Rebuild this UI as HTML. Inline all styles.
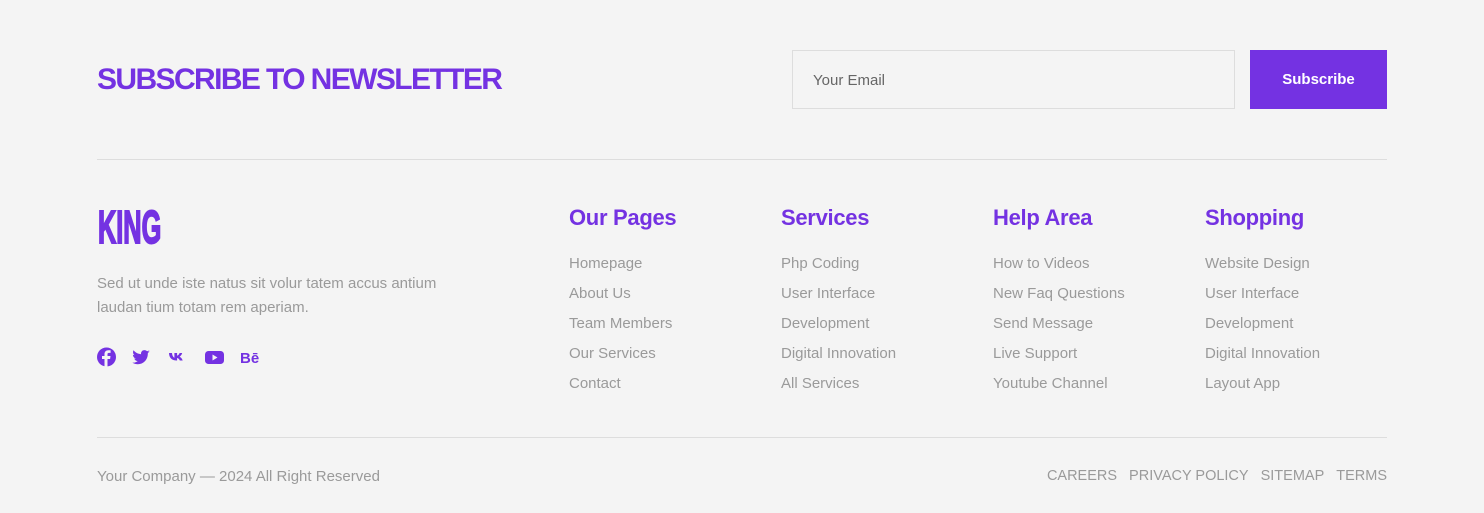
<!DOCTYPE html>
<html><head><style>
*{margin:0;padding:0;box-sizing:border-box}
body{width:1484px;height:513px;background:#f4f4f4;font-family:"Liberation Sans",sans-serif;position:relative;overflow:hidden;color:#9a9a9a}
.a{position:absolute}
h2{position:absolute;left:97px;top:63px;font-size:30px;font-weight:bold;color:#7432e2;letter-spacing:-1.6px;white-space:nowrap}
.inp{left:792px;top:50px;width:443px;height:59px;border:1px solid #ddd;background:#f4f4f4;font-size:15px;color:#666;padding:21px 20px}
.btn{left:1250px;top:50px;width:137px;height:59px;background:#7432e2;color:#fff;font-weight:bold;font-size:15px;text-align:center;line-height:59px}
.hr{left:97px;width:1290px;height:1px;background:#ddd}
.logo{left:98px;top:201px;font-size:46px;line-height:52px;font-weight:bold;color:#7432e2;transform:scaleX(0.55);transform-origin:left top;-webkit-text-stroke:2px #7432e2}
.desc{left:97px;top:272px;font-size:15px;line-height:24px;width:380px}
.col{top:205px}
.col h3{font-size:22px;font-weight:bold;color:#7432e2;margin-bottom:18px;letter-spacing:-0.3px}
.col div{font-size:15px;line-height:30px;white-space:nowrap}
.foot{top:468px;font-size:15px}
.foot span{margin-left:12px}
</style></head><body>
<h2>SUBSCRIBE TO NEWSLETTER</h2>
<div class="a inp">Your Email</div>
<div class="a btn">Subscribe</div>
<div class="a hr" style="top:159px"></div>
<div class="a logo">KING</div>
<div class="a desc">Sed ut unde iste natus sit volur tatem accus antium laudan tium totam rem aperiam.</div>
<svg class="a" style="left:97px;top:347px" width="170" height="20" viewBox="0 0 170 20" fill="#7432e2">
<circle cx="9.5" cy="10" r="9.5"/><path d="M10.5 20V12h2.6l.4-3h-3V7.3c0-.9.3-1.4 1.5-1.4h1.6V3.3c-.3 0-1.2-.1-2.3-.1-2.3 0-3.8 1.4-3.8 3.9V9H5v3h2.5v8z" fill="#f4f4f4"/>
<g transform="translate(35,1) scale(0.85)"><path d="M21 4.5c-.8.4-1.6.6-2.5.7.9-.5 1.6-1.4 1.9-2.4-.8.5-1.8.8-2.7 1-1.7-1.8-4.6-1.8-6.2.1-.8.9-1.1 2.2-.8 3.4C7.1 7.1 4 5.4 1.8 2.7.7 4.7 1.2 7.2 3.1 8.5c-.7 0-1.4-.2-2-.5 0 2.1 1.5 3.9 3.5 4.3-.6.2-1.3.2-2 .1.6 1.8 2.2 3 4.1 3-1.8 1.4-4.1 2.1-6.3 1.8 8.2 5.1 18.5-.5 18.2-11 .9-.6 1.6-1.3 2.2-2.1z"/></g>
<path d="M72 6h3c.2 3 1.6 4.5 2.4 4.7V6h2.7v2.6c1-.1 2.1-1.3 2.5-2.6h2.6c-.4 1.8-1.7 3.1-2.6 3.7 1 .5 2.5 1.7 3.1 3.8h-2.9c-.5-1.4-1.6-2.4-2.7-2.5v2.5h-.3C74.6 13.5 72.1 10.5 72 6z"/>
<rect x="108" y="4" width="19" height="13" rx="3.5"/><path d="M115.5 7.5v6l5-3z" fill="#f4f4f4"/>
<text x="143" y="16" font-size="15" font-weight="bold" font-family="Liberation Sans">Bē</text>
</svg>
<div class="a col" style="left:569px"><h3>Our Pages</h3><div>Homepage</div><div>About Us</div><div>Team Members</div><div>Our Services</div><div>Contact</div></div>
<div class="a col" style="left:781px"><h3>Services</h3><div>Php Coding</div><div>User Interface</div><div>Development</div><div>Digital Innovation</div><div>All Services</div></div>
<div class="a col" style="left:993px"><h3>Help Area</h3><div>How to Videos</div><div>New Faq Questions</div><div>Send Message</div><div>Live Support</div><div>Youtube Channel</div></div>
<div class="a col" style="left:1205px"><h3>Shopping</h3><div>Website Design</div><div>User Interface</div><div>Development</div><div>Digital Innovation</div><div>Layout App</div></div>
<div class="a hr" style="top:437px"></div>
<div class="a foot" style="left:97px">Your Company — 2024 All Right Reserved</div>
<div class="a foot" style="right:97px;font-size:14.5px">CAREERS<span>PRIVACY POLICY</span><span>SITEMAP</span><span>TERMS</span></div>
</body></html>
